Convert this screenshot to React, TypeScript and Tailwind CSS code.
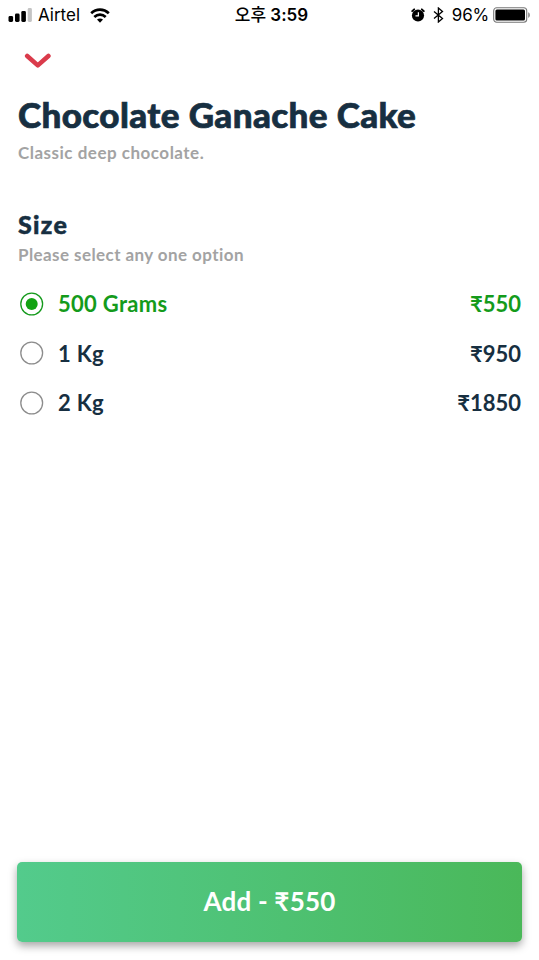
import { useState } from "react";
import clsx from "clsx";

const options = [
  { label: "500 Grams", price: 550 },
  { label: "1 Kg", price: 950 },
  { label: "2 Kg", price: 1850 },
];

const StatusBar = () => (
  <div className="grid h-[30px] grid-cols-3 items-center pl-2 pr-2 font-['Inter','Noto_Sans_CJK_KR',sans-serif] text-[17px] text-black">
    <div className="flex items-center">
      <svg width="24" height="14" viewBox="0 0 24 14">
        <rect x="0.5" y="8" width="4.6" height="6" rx="1.4" />
        <rect x="7" y="5.5" width="4.6" height="8.5" rx="1.4" />
        <rect x="13.3" y="3" width="4.6" height="11" rx="1.4" />
        <rect x="19.7" y="0" width="4.2" height="14" rx="1.4" fill="#c4c4c4" />
      </svg>
      <span className="ml-1.5 pt-0.5">Airtel</span>
      <svg className="ml-2.5" width="20" height="15" viewBox="0 0 20 15">
        <path d="M1.2 5.2C6.2 .5 13.8 .5 18.8 5.2" fill="none" stroke="black" strokeWidth="2.7" />
        <path d="M4.3 8.9C7.6 5.9 12.4 5.9 15.7 8.9" fill="none" stroke="black" strokeWidth="2.7" />
        <path d="M7 11.6C8.7 10 11.3 10 13 11.6L10 14.7Z" />
      </svg>
    </div>
    <div className="pt-0.5 pl-1 text-center font-semibold whitespace-nowrap">
      <span className="font-medium">오후</span> 3:59
    </div>
    <div className="flex items-center justify-end">
      <svg width="14" height="14" viewBox="0 0 15 15">
        <circle cx="7.5" cy="8" r="6.5" />
        <path d="M1.3 3.4 3.4 1.4M13.7 3.4 11.6 1.4" stroke="black" strokeWidth="2" strokeLinecap="round" />
        <path d="M7.9 4.5V8.5H4.8" fill="none" stroke="white" strokeWidth="1.3" />
      </svg>
      <svg className="ml-2" width="11" height="16" viewBox="0 0 11 16">
        <path d="M1 4.4 9.5 11.6 5.4 15V1L9.5 4.4 1 11.6" fill="none" stroke="black" strokeWidth="1.3" />
      </svg>
      <span className="ml-2 pt-0.5 tracking-[-0.2px]">96%</span>
      <svg className="ml-1" width="38" height="16" viewBox="0 0 38 16">
        <rect x="0.7" y="0.7" width="33" height="14.6" rx="3" fill="none" stroke="#777" strokeWidth="1.1" />
        <rect x="2.4" y="2.4" width="29.6" height="11.2" rx="1.5" />
        <path d="M35.2 5.2C37.4 6 37.4 10 35.2 10.8Z" fill="#888" />
      </svg>
    </div>
  </div>
);

const Radio = ({ checked }: { checked: boolean }) => (
  <svg width="24" height="24" viewBox="0 0 24 24" fill="none">
    <circle cx="11.7" cy="12" r="10.9" stroke={checked ? "#159a1c" : "#8c8c8c"} strokeWidth="1.3" />
    {checked && <circle cx="11.7" cy="12" r="6" fill="#12a212" />}
  </svg>
);

const App = () => {
  const [selected, setSelected] = useState(0);

  return (
    <div className="flex h-[960px] w-[539px] flex-col overflow-hidden bg-white font-['Lato','Noto_Sans',sans-serif] text-[#172f41]">
      <StatusBar />
      <main className="flex flex-1 flex-col px-[18px] pb-[18px]">
        <button className="mt-[22px] ml-[6px] h-[18px] w-7" aria-label="Close">
          <svg width="28" height="18" viewBox="0 0 28 18" fill="none">
            <path d="M3.2 4 13.8 13.4 24.4 4" stroke="#da3b4b" strokeWidth="4.6" strokeLinecap="round" strokeLinejoin="round" />
          </svg>
        </button>
        <h1 className="mt-[22px] text-[35px] leading-[44px] font-black tracking-[0.4px] whitespace-nowrap [-webkit-text-stroke:0.7px_#172f41]">
          Chocolate Ganache Cake
        </h1>
        <p className="mt-[5px] text-[17px] leading-6 font-bold tracking-[0.5px] text-[#a3a3a3]">Classic deep chocolate.</p>
        <h2 className="mt-[43px] text-[25px] leading-8 font-black tracking-[1.3px] [-webkit-text-stroke:0.5px_#172f41]">Size</h2>
        <p className="mt-[3px] text-[17px] leading-6 font-bold tracking-[0.42px] text-[#a3a3a3]">Please select any one option</p>
        <div className="mt-3 flex flex-col">
          {options.map((option, i) => (
            <button
              key={option.label}
              onClick={() => setSelected(i)}
              className={clsx(
                "flex h-[49.6px] items-center pl-0.5 text-[22px] font-bold",
                i === selected && "text-[#149b1b]"
              )}
            >
              <Radio checked={i === selected} />
              <span className="ml-3.5 tracking-[0.3px]">{option.label}</span>
              <span className="ml-auto">₹{option.price}</span>
            </button>
          ))}
        </div>
        <button className="mt-auto -mx-px h-20 rounded-[5px] bg-linear-to-r from-[#53cb8c] to-[#4ab859] pb-0.5 text-[26px] font-bold tracking-[0.2px] text-white shadow-[0_4px_8px_rgba(0,0,0,0.35)]">
          Add - ₹{options[selected].price}
        </button>
      </main>
    </div>
  );
};

export default App;
